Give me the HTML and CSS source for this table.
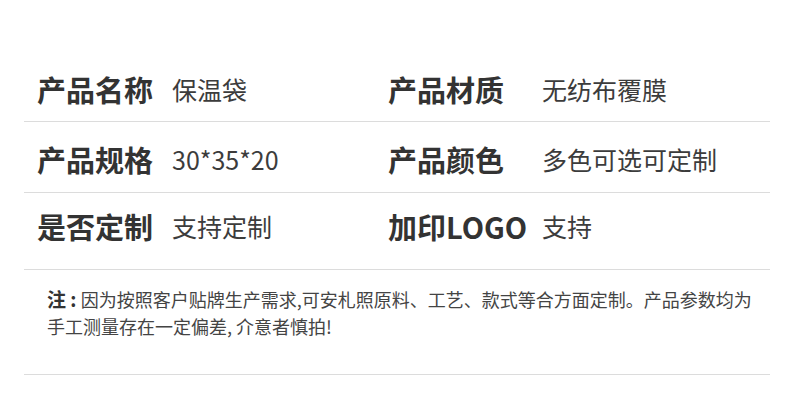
FILE: index.html
```html
<!DOCTYPE html>
<html lang="zh-CN">
<head>
  <meta charset="UTF-8" />
  <title>产品参数</title>
  <link rel="stylesheet" href="styles.css">
</head>
<body>

  <div class="sheet">
    <div class="row row-first">
      <div class="cell">
        <span class="label">产品名称</span>
        <span class="value">保温袋</span>
      </div>
      <div class="cell cell-right">
        <span class="label">产品材质</span>
        <span class="value">无纺布覆膜</span>
      </div>
    </div>

    <div class="row row-second">
      <div class="cell">
        <span class="label">产品规格</span>
        <span class="value">30*35*20</span>
      </div>
      <div class="cell cell-right">
        <span class="label">产品颜色</span>
        <span class="value">多色可选可定制</span>
      </div>
    </div>

    <div class="row row-third">
      <div class="cell">
        <span class="label">是否定制</span>
        <span class="value">支持定制</span>
      </div>
      <div class="cell cell-right">
        <span class="label">加印LOGO</span>
        <span class="value">支持</span>
      </div>
    </div>

    <!-- 备注 -->
    <div class="note">
      <b>注 : </b>因为按照客户贴牌生产需求,可安札照原料、工艺、款式等合方面定制。产品参数均为<br>
      手工测量存在一定偏差, 介意者慎拍!
    </div>
  </div>

</body>
</html>
```

FILE: styles.css
```css
* {
  box-sizing: border-box;
}

body {
  margin: 0;
  background-color: #fff;
  font-family: "Noto Sans CJK SC", "Noto Sans", sans-serif;
  color: #333;
}

.sheet {
  width: 746px;
  margin-left: 24px;
}

.row {
  display: flex;
  border-bottom: 1px solid #dcdcdc;
}

.row-first {
  padding: 75px 0 18px;
}

.row-second {
  padding: 23px 0 19px;
}

.row-third {
  padding: 19px 0 29px;
}

.cell {
  display: flex;
  align-items: center;
  width: 364px;
  padding-left: 13px;
  height: 28px;
}

.cell-right {
  width: auto;
  padding-left: 0;
}

.label {
  font-size: 29px;
  line-height: 28px;
  font-weight: 700;
  color: #333;
  width: 135px;
  flex-shrink: 0;
}

.cell-right .label {
  width: 154px;
}

.value {
  font-size: 25px;
  line-height: 28px;
  color: #3c3c3c;
  white-space: nowrap;
}

.note {
  padding: 15px 0 34px 23px;
  font-size: 18px;
  line-height: 27px;
  color: #444;
  white-space: nowrap;
  border-bottom: 1px solid #dcdcdc;
}

.note b {
  font-size: 19px;
  color: #333;
}
```
